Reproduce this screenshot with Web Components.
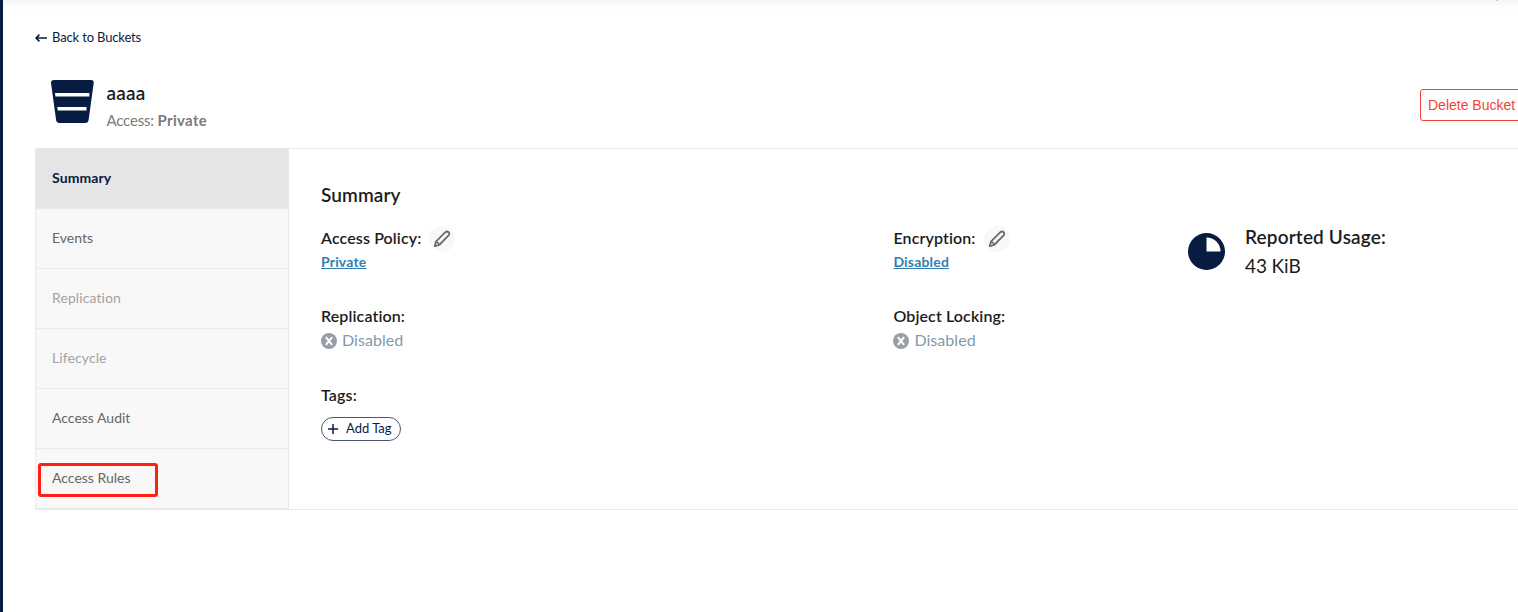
<!DOCTYPE html>
<html lang="en">
<head>
<meta charset="utf-8">
<title>Bucket aaaa</title>
<style>
  html, body { margin: 0; height: 100%; overflow: hidden; background: #fff; }
  body { font-family: Lato, sans-serif; font-variant-ligatures: none; color: #1c1c1c; }
</style>
</head>
<body>
<bucket-page>
  <back-link slot="nav">Back to Buckets</back-link>
  <bucket-header slot="header" name="aaaa" access="Private">
    <delete-button>Delete Bucket</delete-button>
  </bucket-header>
  <vertical-tabs slot="tabs">
    <tab-item selected>Summary</tab-item>
    <tab-item>Events</tab-item>
    <tab-item disabled>Replication</tab-item>
    <tab-item disabled>Lifecycle</tab-item>
    <tab-item>Access Audit</tab-item>
    <tab-item marked>Access Rules</tab-item>
  </vertical-tabs>
  <bucket-summary></bucket-summary>
</bucket-page>

<script>
function define(name, html, setup) {
  customElements.define(name, class extends HTMLElement {
    constructor() {
      super();
      this.attachShadow({ mode: 'open' });
    }

    connectedCallback() {
      this.shadowRoot.innerHTML = html;
      if (setup) setup(this, this.shadowRoot);
    }
  });
}

define('bucket-page', `
  <style>
    :host { display: flex; height: 100%; }
    .rail { flex: 0 0 3px; background: #081c42; }
    main {
      flex: 0 0 1540px;
      box-sizing: border-box;
      position: relative;
      padding: 28px 0 0 32px;
      background: linear-gradient(#f6f6f6, #fff 9px);
    }
    /* bottom edge of a toolbar icon scrolled out of view */
    .speck { position: absolute; left: 1493px; top: 0; width: 2px; height: 1px; background: #ccc; }
    .panel {
      display: flex;
      height: 360px;
      border: 1px solid #eaeaea;
      border-right: 0;
    }
    .content { flex: 1; padding: 34px 0 0 32px; }
  </style>
  <div class="rail"></div>
  <main>
    <div class="speck"></div>
    <slot name="nav"></slot>
    <slot name="header"></slot>
    <div class="panel">
      <slot name="tabs"></slot>
      <div class="content"><slot></slot></div>
    </div>
  </main>
`);

define('back-link', `
  <style>
    :host { display: flex; align-items: center; gap: 5px; height: 18px; font-size: 13px; letter-spacing: -0.15px; color: #081c42; }
    svg { display: block; margin-top: 2px; }
  </style>
  <svg width="12" height="8" viewBox="0 0 12 8" fill="none" stroke="#081c42" stroke-width="1.7"><path d="M12 4H1.4M4.4 0.7L1.1 4l3.3 3.3"/></svg>
  <span><slot></slot></span>
`);

define('bucket-header', `
  <style>
    :host { display: flex; height: 102px; }
    svg { display: block; margin: 34px 11.5px 0 15px; }
    .info { flex: 1; padding-top: 34px; }
    .name { font-size: 19px; line-height: 26px; font-weight: 600; letter-spacing: 0.2px; }
    .access { font-size: 15px; line-height: 20px; margin-top: 4px; color: #7a7a7a; letter-spacing: -0.2px; }
    b { letter-spacing: 0.35px; }
    .action { padding-top: 43px; }
  </style>
  <svg width="45" height="44" viewBox="0 0 45 44">
    <path d="M4 0h37q3 0 2.7 3L38.6 40q-.4 3-3.4 3H9.5q-3 0-3.4-3L1 3Q.9 0 4 0z" fill="#081c42"/>
    <path d="M5 13h34.4v3.4H5.4zM7.3 27h29.2v3.4H7.7z" fill="#fff"/>
  </svg>
  <div class="info">
    <div class="name"></div>
    <div class="access">Access: <b></b></div>
  </div>
  <div class="action"><slot></slot></div>
`, (el, root) => {
  root.querySelector('.name').textContent = el.getAttribute('name');
  root.querySelector('b').textContent = el.getAttribute('access');
});

define('delete-button', `
  <style>
    :host { display: block; width: 123px; }
    button {
      width: 100%;
      height: 32px;
      padding: 0 7px;
      text-align: left;
      background: #fff;
      border: 1px solid #f44336;
      border-radius: 3px;
      color: #f44336;
      font: 14px "Liberation Sans", Arial, sans-serif;
    }
  </style>
  <button type="button"><slot></slot></button>
`);

define('vertical-tabs', `
  <style>
    :host { display: block; flex: 0 0 252px; background: #f8f8f8; border-right: 1px solid #eaeaea; }
  </style>
  <slot></slot>
`);

define('tab-item', `
  <style>
    :host {
      display: flex;
      align-items: center;
      position: relative;
      box-sizing: border-box;
      height: 60px;
      padding: 0 16px 2px;
      border-bottom: 1px solid #eaeaea;
      font-size: 14px;
      color: #666;
    }
    :host([selected]) { background: #e5e5e5; color: #081c42; font-weight: 700; letter-spacing: 0.1px; }
    :host([disabled]) { color: #a3a3a3; letter-spacing: 0.1px; }
    /* highlight frame laid over the row */
    .mark { display: none; }
    :host([marked]) .mark {
      display: block;
      position: absolute;
      left: 2px;
      top: 14px;
      box-sizing: border-box;
      width: 120px;
      height: 34px;
      border: 3px solid #ff1e12;
      border-radius: 3px;
    }
  </style>
  <span><slot></slot></span>
  <div class="mark"></div>
`);

define('edit-button', `
  <style>
    :host { display: inline-flex; }
    button {
      display: flex;
      align-items: center;
      justify-content: center;
      width: 26px;
      height: 26px;
      padding: 0;
      border: 0;
      border-radius: 50%;
      background: #f8f8f8;
    }
  </style>
  <button type="button" aria-label="Edit">
    <svg width="18" height="18" viewBox="0 0 18 18" fill="none" stroke="#6b6b6b" stroke-width="1.8" stroke-linejoin="round">
      <path d="M1.8 16.2l1.1-4.5L12.4 2.2q1.6-1.4 3.2 0 1.4 1.6 0 3.2L6.2 15z"/>
      <path d="M2.9 11.7q2.6.5 3.3 3.3" stroke-width="1.4"/>
      <path d="M1.6 16.4l.6-2.2 1.5 1.5z" fill="#6b6b6b" stroke-width="1"/>
    </svg>
  </button>
`);

define('summary-field', `
  <style>
    :host { display: block; }
    .label { display: flex; align-items: center; gap: 8px; height: 26px; font-size: 16px; font-weight: 600; letter-spacing: 0.12px; }
    .label span { margin-top: -3px; }
    .value { display: flex; align-items: center; height: 20px; }
  </style>
  <div class="label"><span></span><slot name="action"></slot></div>
  <div class="value"><slot></slot></div>
`, (el, root) => {
  root.querySelector('span').textContent = el.getAttribute('label');
});

define('value-link', `
  <style>
    :host { display: block; line-height: 18px; font-size: 14px; }
    a { font-weight: 700; letter-spacing: 0.18px; color: #2f7fb5; text-decoration: underline; }
  </style>
  <a><slot></slot></a>
`);

define('disabled-status', `
  <style>
    :host { display: flex; align-items: center; gap: 5px; font-size: 16px; letter-spacing: 0.05px; color: #8399ab; }
    svg { display: block; margin-top: 1px; }
    span { margin-top: -1px; }
  </style>
  <svg width="16" height="16" viewBox="0 0 16 16">
    <circle cx="8" cy="8" r="8" fill="#969fa8"/>
    <path d="M4.9 4.2l6.2 7.6M11.1 4.2L4.9 11.8" stroke="#fff" stroke-width="2.1"/>
  </svg>
  <span><slot></slot></span>
`);

define('add-tag', `
  <style>
    button {
      display: flex;
      align-items: center;
      gap: 8px;
      box-sizing: border-box;
      width: 80px;
      height: 24px;
      padding: 0 0 0 6px;
      border: 1px solid #475577;
      border-radius: 12px;
      background: #fff;
      color: #081c42;
      font: 13px Lato, sans-serif;
      white-space: nowrap;
    }
    span { margin-top: -2px; }
  </style>
  <button type="button">
    <svg width="10" height="10" viewBox="0 0 10 10"><path d="M5 0v10M0 5h10" stroke="#081c42" stroke-width="1.5"/></svg>
    <span><slot></slot></span>
  </button>
`);

define('reported-usage', `
  <style>
    :host { display: flex; gap: 20px; margin-top: -1px; }
    svg { display: block; margin-top: 8px; }
    .title { font-size: 19px; line-height: 24px; font-weight: 600; letter-spacing: 0.15px; }
    .size { font-size: 19px; line-height: 24px; margin-top: 5px; letter-spacing: -0.1px; }
  </style>
  <svg width="37" height="37" viewBox="0 0 37 37">
    <circle cx="18.5" cy="18.5" r="18.5" fill="#081c42"/>
    <path d="M18.5 4.5a14 14 0 0 1 14 14h-14z" fill="#fff"/>
  </svg>
  <div>
    <div class="title">Reported Usage:</div>
    <div class="size"><slot></slot></div>
  </div>
`);

define('bucket-summary', `
  <style>
    :host { display: block; }
    h2 { margin: 0; font-size: 19px; line-height: 24px; font-weight: 600; letter-spacing: 0.1px; }
    .grid {
      display: grid;
      grid-template-columns: 572.4px 294.6px 300px;
      grid-template-rows: 78px 79px 60px;
      margin-top: 19px;
    }
    add-tag { display: block; margin-top: 19px; }
  </style>
  <h2>Summary</h2>
  <div class="grid">
    <summary-field label="Access Policy:">
      <edit-button slot="action"></edit-button>
      <value-link>Private</value-link>
    </summary-field>
    <summary-field label="Encryption:">
      <edit-button slot="action"></edit-button>
      <value-link>Disabled</value-link>
    </summary-field>
    <reported-usage>43 KiB</reported-usage>
    <summary-field label="Replication:"><disabled-status>Disabled</disabled-status></summary-field>
    <summary-field label="Object Locking:" style="grid-column: 2 / 4"><disabled-status>Disabled</disabled-status></summary-field>
    <summary-field label="Tags:"><add-tag>Add Tag</add-tag></summary-field>
  </div>
`);
</script>
</body>
</html>
